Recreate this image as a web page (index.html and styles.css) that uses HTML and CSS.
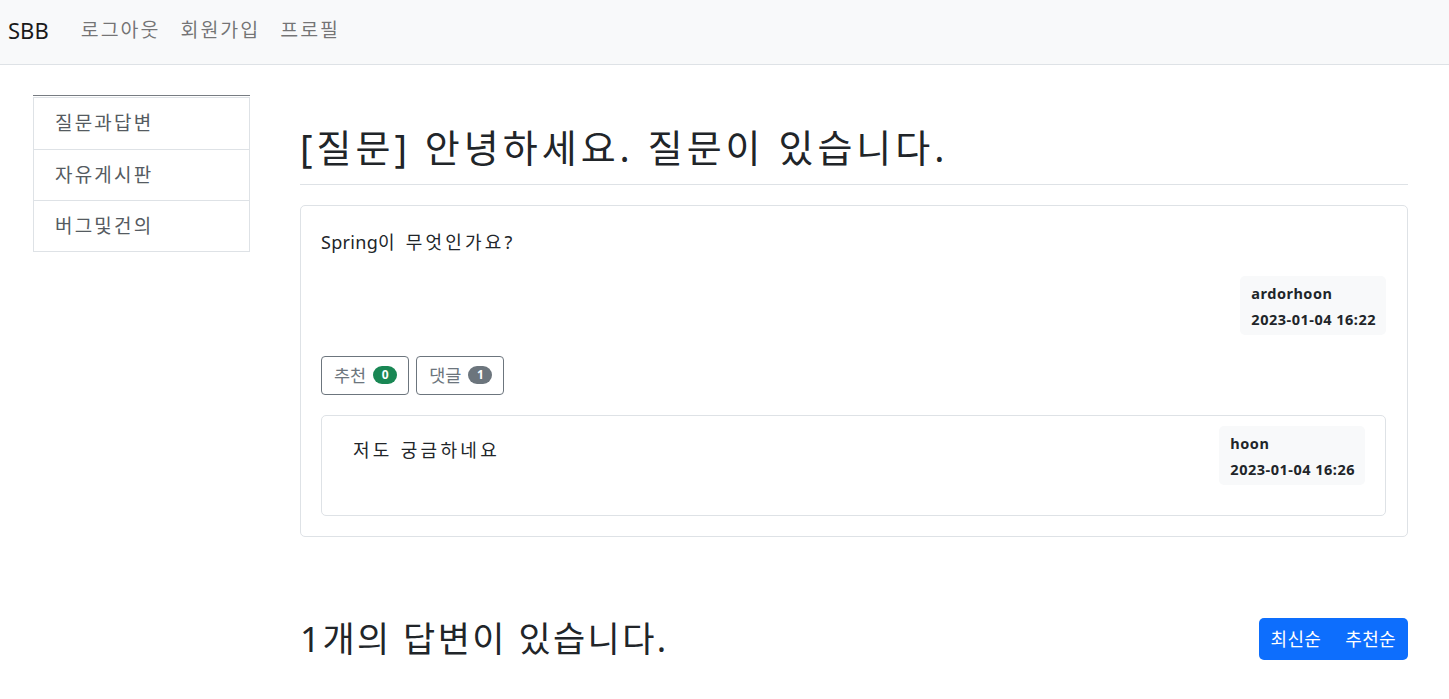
FILE: index.html
```html
<!DOCTYPE html>
<html lang="ko">
<head>
<meta charset="utf-8">
<title>SBB</title>
<link rel="stylesheet" href="styles.css">
</head>
<body>
<nav class="navbar">
  <a class="brand" href="#">SBB</a>
  <ul class="nav">
    <li><a class="nav-link" href="#">로그아웃</a></li>
    <li><a class="nav-link" href="#">회원가입</a></li>
    <li><a class="nav-link" href="#">프로필</a></li>
  </ul>
</nav>
<div class="page">
  <aside class="sidebar">
    <div class="list-group">
      <a class="list-item" href="#">질문과답변</a>
      <a class="list-item" href="#">자유게시판</a>
      <a class="list-item" href="#">버그및건의</a>
    </div>
  </aside>
  <main class="main">
    <h2 class="q-title">[질문] 안녕하세요. 질문이 있습니다.</h2>
    <div class="card">
      <div class="card-body">
        <div class="q-content"><span class="latin">Spring</span>이 무엇인가요?</div>
        <div class="author-row">
          <div class="author">
            <div class="author-name">ardorhoon</div>
            <div class="author-date">2023-01-04 16:22</div>
          </div>
        </div>
        <div class="actions">
          <a class="btn-outline" href="#"><span class="btn-label">추천</span> <span class="pill pill-green">0</span></a>
          <a class="btn-outline" href="#"><span class="btn-label">댓글</span> <span class="pill pill-gray">1</span></a>
        </div>
        <div class="comment">
          <div class="comment-text">저도 궁금하네요</div>
          <div class="author">
            <div class="author-name">hoon</div>
            <div class="author-date">2023-01-04 16:26</div>
          </div>
        </div>
      </div>
    </div>
    <div class="answer-head">
      <h5 class="a-title">1개의 답변이 있습니다.</h5>
      <div class="btn-group">
        <a class="btn-primary" href="#">최신순</a>
        <a class="btn-primary" href="#">추천순</a>
      </div>
    </div>
  </main>
</div>
</body>
</html>
```
FILE: styles.css
```css
* { box-sizing: border-box; }
body {
  margin: 0;
  font-family: "Noto Sans", "Noto Sans CJK KR", sans-serif;
  color: #212529;
  background: #fff;
  font-size: 18px;
  line-height: 1.5;
}
a { text-decoration: none; }

.navbar {
  height: 65px;
  background: #f8f9fa;
  border-bottom: 1px solid #dee2e6;
  display: flex;
  align-items: center;
  padding: 0 8px;
}
.brand {
  font-size: 22px;
  color: #1a1a1a;
  margin-right: 32px;
  line-height: 1;
  margin-top: -4px;
}
.nav {
  list-style: none;
  margin: 0;
  padding: 0;
  display: flex;
  gap: 20px;
  margin-top: -5px;
}
.nav-link {
  font-size: 19.5px;
  letter-spacing: 2px;
  color: rgba(0, 0, 0, 0.55);
}

.page {
  display: flex;
  padding: 30px 41px 0 33px;
}
.sidebar {
  width: 217px;
  flex: none;
  border-top: 1px solid #777c82;
  padding-top: 1px;
}
.list-group {
  border: 1px solid #dee2e6;
}
.list-item {
  display: block;
  height: 51px;
  line-height: 51px;
  padding-left: 21px;
  font-size: 19px;
  letter-spacing: 2.2px;
  color: #555b61;
  border-top: 1px solid #dee2e6;
}
.list-item:first-child { border-top: none; }

.main {
  margin-left: 50px;
  flex: 1;
}
.q-title {
  margin: 30px 0 0;
  font-size: 38px;
  font-weight: 400;
  line-height: 1.2;
  letter-spacing: 4px;
  padding-bottom: 13px;
  border-bottom: 1px solid #dee2e6;
}
.card {
  margin-top: 20px;
  border: 1px solid #dee2e6;
  border-radius: 5px;
}
.card-body {
  padding: 23px 21px 20px 20px;
}
.q-content {
  line-height: 27px;
  letter-spacing: 3.2px;
}
.latin {
  letter-spacing: 0.3px;
}
.author-row {
  display: flex;
  justify-content: flex-end;
  margin-top: 20px;
}
.author {
  background: #f8f9fa;
  border-radius: 5px;
  padding: 4px 10px 3px 11px;
  font-size: 14.5px;
  font-weight: 700;
  line-height: 26px;
  letter-spacing: 0.5px;
  color: #212529;
}
.actions {
  display: flex;
  gap: 7px;
  margin-top: 21px;
}
.btn-outline {
  display: flex;
  align-items: center;
  gap: 7px;
  height: 39px;
  padding: 0 11px 0 12px;
  border: 1px solid #6c757d;
  border-radius: 4px;
  color: #6c757d;
  font-size: 17.5px;
}
.pill {
  display: inline-block;
  min-width: 24px;
  height: 18px;
  line-height: 18px;
  border-radius: 9px;
  color: #fff;
  font-size: 12px;
  font-weight: 700;
  text-align: center;
}
.pill-green { background: #198754; }
.pill-gray { background: #6c757d; }

.comment {
  margin-top: 20px;
  border: 1px solid #dee2e6;
  border-radius: 5px;
  padding: 10px 20px 30px 31px;
  display: flex;
  justify-content: space-between;
  align-items: flex-start;
}
.comment-text {
  margin-top: 11px;
  line-height: 27px;
  letter-spacing: 3.3px;
}

.answer-head {
  display: flex;
  justify-content: space-between;
  align-items: center;
  margin-top: 81px;
}
.a-title {
  margin: 0;
  font-size: 35px;
  font-weight: 400;
  line-height: 1.2;
  letter-spacing: 2.4px;
}
.btn-group {
  display: flex;
  background: #0d6efd;
  border-radius: 5px;
  height: 42px;
}
.btn-primary {
  color: #fff;
  font-size: 18px;
  line-height: 42px;
  letter-spacing: 0.35px;
  padding: 0 12px;
}
```
